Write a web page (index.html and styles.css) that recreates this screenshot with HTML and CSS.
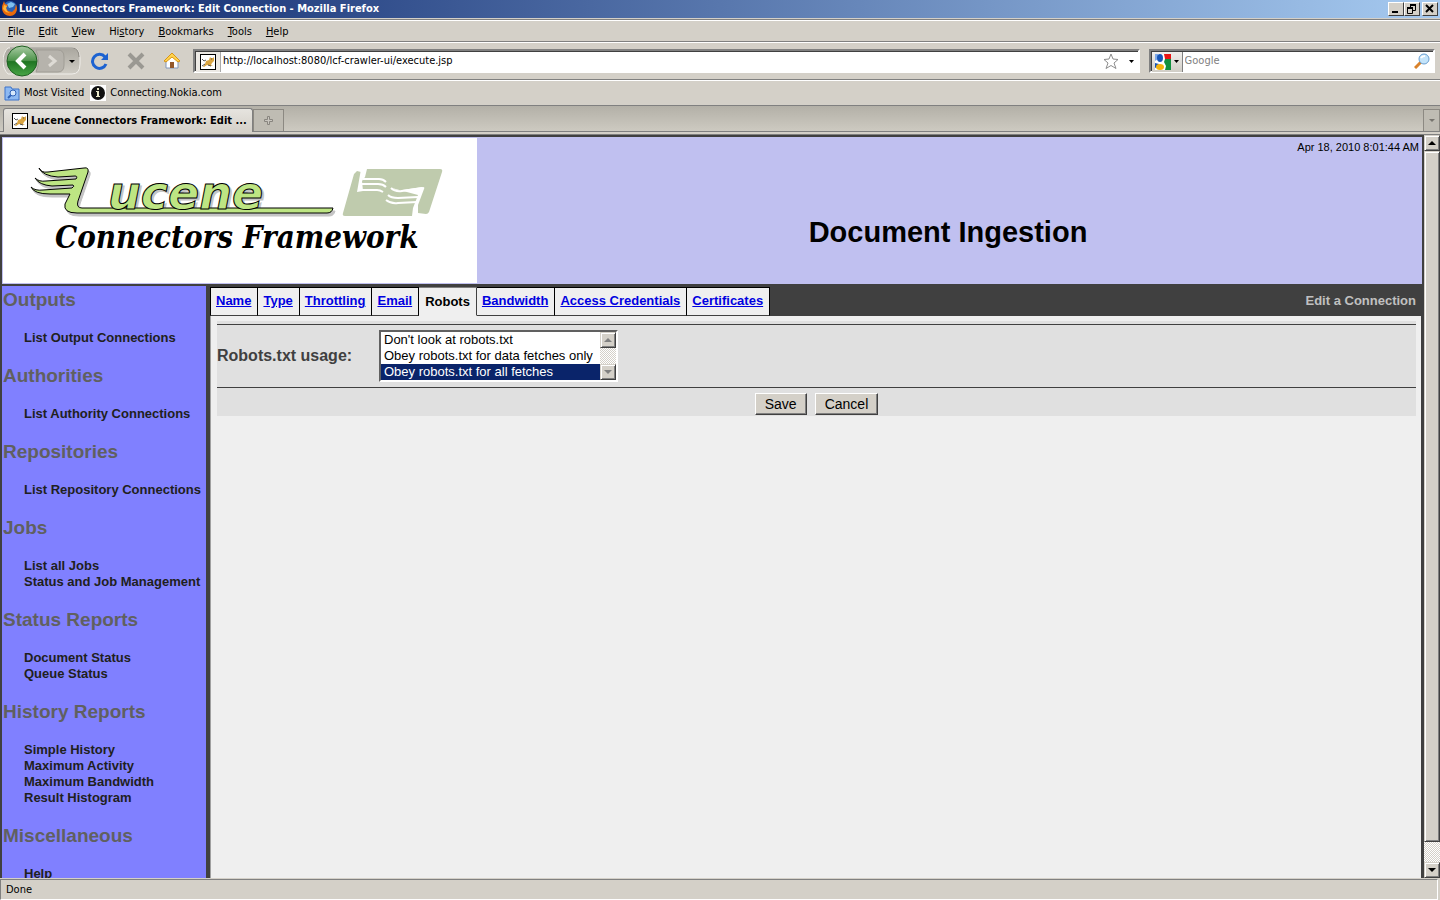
FILE: index.html
```html
<!DOCTYPE html>
<html lang="en">
<head>
  <meta charset="UTF-8">
  <meta name="viewport" content="width=device-width, initial-scale=1.0">
  <title>Lucene Connectors Framework: Edit Connection</title>
  <link rel="stylesheet" href="styles.css">
</head>
<body>
  <svg class="defs" width="0" height="0" aria-hidden="true">
    <symbol id="cat" viewBox="0 0 16 16">
      <rect x=".5" y=".5" width="15" height="15" fill="#fff" stroke="#000"/>
      <path d="M3 13l2-3 1-3 3-1 1-3 1 1h2l1-1v4l-2 2-1 2 2 1h-3l-3-1-3 2z" fill="#d9a441"/>
      <path d="M2 5l2 2 2-1M2 12l3-2M8 11l3 1M11 5h1" stroke="#555" fill="none"/>
    </symbol>
  </svg>

  <!-- window title -->
  <div class="titlebar">
    <svg width="18" height="18" viewBox="0 0 18 18">
      <circle cx="9" cy="8" r="7" fill="#2b62b5"/>
      <path d="M6 4l4-2 4 2-2 3-4 1z" fill="#7fc0ef"/>
      <path d="M3 1l1 3 3 1-2 3 2 3 4 1 3-3 1-5 1 4c0 5-3 8-7 8S1 13 1 8c0-3 1-4 2-7z" fill="#e8690b"/>
      <path d="M3 5l3 1-1 2 1 3 3 2-4-1-3-3z" fill="#fcb63a"/>
    </svg>
    <span class="title">Lucene Connectors Framework: Edit Connection - Mozilla Firefox</span>
    <button class="win" aria-label="Minimize"><svg width="12" height="10"><path d="M2 8h6" stroke="#000" stroke-width="2"/></svg></button>
    <button class="win" aria-label="Restore"><svg width="12" height="10"><path d="M4 1h6M1 4h6" stroke="#000" stroke-width="2"/><path d="M4.500 1v2M9.500 1v5.500H7M1.500 4v5.500h5V4" stroke="#000" fill="none"/></svg></button>
    <button class="win close" aria-label="Close"><svg width="12" height="10"><path d="M2 1l7 7M9 1L2 8" stroke="#000" stroke-width="2"/></svg></button>
  </div>

  <nav class="menubar">
    <a href="#"><u>F</u>ile</a>
    <a href="#"><u>E</u>dit</a>
    <a href="#"><u>V</u>iew</a>
    <a href="#">Hi<u>s</u>tory</a>
    <a href="#"><u>B</u>ookmarks</a>
    <a href="#"><u>T</u>ools</a>
    <a href="#"><u>H</u>elp</a>
  </nav>

  <div class="toolbar">
    <button class="history" aria-label="Back and forward">
      <svg width="80" height="34" viewBox="3 0 80 34">
        <defs>
          <linearGradient id="back" x2="0" y2="1"><stop offset="0" stop-color="#a9cba4"/><stop offset=".48" stop-color="#4f954c"/><stop offset=".52" stop-color="#1f7522"/><stop offset="1" stop-color="#49a546"/></linearGradient>
          <linearGradient id="keyhole" x2="0" y2="1"><stop offset="0" stop-color="#aaa79f"/><stop offset="1" stop-color="#cfccc4"/></linearGradient>
        </defs>
        <path d="M8 4h64q8 0 8 10v6q0 10-8 10H8q-5-5-5-13T8 4z" fill="url(#keyhole)" stroke="#f0eeea"/>
        <path d="M10 4h62q7 0 7 9" fill="none" stroke="#8d8a83"/>
        <path d="M36 6h22q6 0 6 7v8q0 7-6 7H36q5-11 0-22z" fill="#b6b3ac" stroke="#a09d96"/>
        <path d="M49 12l6 5-6 5" fill="none" stroke="#dedbd5" stroke-width="3"/>
        <circle cx="22" cy="17" r="15" fill="url(#back)" stroke="#1d5f20"/>
        <path d="M25 10l-7 7 7 7" fill="none" stroke="#fff" stroke-width="4"/>
        <path d="M69 16h6l-3 3z"/>
      </svg>
    </button>
    <button class="tool" aria-label="Reload">
      <svg width="18" height="18" viewBox="0 0 18 18"><path d="M14 5A7 7 0 1 0 15 12" fill="none" stroke="#1c62d1" stroke-width="3"/><path d="M10 8h7V1z" fill="#1c62d1"/></svg>
    </button>
    <button class="tool" aria-label="Stop">
      <svg width="18" height="18" viewBox="0 0 18 18"><path d="M2 2l14 14M16 2L2 16" stroke="#9a9892" stroke-width="4"/></svg>
    </button>
    <button class="tool" aria-label="Home">
      <svg width="18" height="18" viewBox="0 0 18 18"><path d="M3 9l6-6 6 6v7H3z" fill="#fff" stroke="#8096bb"/><path d="M7 10h4v6H7z" fill="#94582b"/><path d="M1 9l8-8 8 8-2 1-6-5-6 5z" fill="#ffd34d" stroke="#d99415"/></svg>
    </button>
    <div class="field url">
      <span class="site"><svg width="16" height="16"><use href="#cat"/></svg></span>
      <input type="text" aria-label="Location" value="http://localhost:8080/lcf-crawler-ui/execute.jsp">
      <svg width="16" height="16" viewBox="0 0 16 16"><path d="M8 1l2 5 5 .5-4 3.500 2 5.500-5-3-5 3 2-5.500-4-3.500L6 6z" fill="#fff" stroke="#8c8c8c"/></svg>
      <svg class="drop" width="5" height="3"><path d="M0 0h5L2.500 3z"/></svg>
    </div>
    <div class="field search">
      <span class="engine">
        <svg width="16" height="16" viewBox="0 0 16 16"><path d="M0 0h16v16H0z" fill="#fff"/><path d="M0 0h3v5L0 7z" fill="#7fa9e8"/><path d="M9 0h7v5h-6z" fill="#e81414"/><path d="M10 5h6v11h-6l1-4-2-4z" fill="#11903f"/><path d="M0 9l4 1-2 3-2 1z" fill="#1756b8"/><ellipse cx="5" cy="4" rx="3" ry="4" fill="#1756b8"/><ellipse cx="5" cy="13" rx="4" ry="3" fill="#f6b40b"/></svg>
        <svg width="5" height="3"><path d="M0 0h5L2.500 3z"/></svg>
      </span>
      <input type="text" aria-label="Search" placeholder="Google">
      <svg width="16" height="16" viewBox="0 0 16 16"><path d="M1 15l6-6" stroke="#d9822b" stroke-width="3"/><circle cx="10" cy="6" r="5" fill="#c4e4fa" stroke="#6a9fd0"/><path d="M7 5q1-2 4-2" stroke="#fff" stroke-width="2" fill="none"/></svg>
    </div>
  </div>

  <div class="bookmarks">
    <a href="#">
      <svg width="16" height="16" viewBox="0 0 16 16"><path d="M1 2h6l1 2h7v11H1z" fill="#8db9f2" stroke="#3c73c9"/><circle cx="9" cy="8" r="3" fill="#d6e8fc" stroke="#2f62b8"/><path d="M7 10l-3 3" stroke="#2f62b8" stroke-width="2"/></svg>
      Most Visited
    </a>
    <a href="#">
      <svg width="16" height="16" viewBox="0 0 16 16"><path d="M0 0h16v16H0z" fill="#fff"/><circle cx="8" cy="8" r="7" fill="#111"/><path d="M7 3h2v2H7zM6 6h3v5h1v1H6v-1h1V7H6z" fill="#e8e6c8"/></svg>
      Connecting.Nokia.com
    </a>
  </div>

  <div class="tabstrip">
    <div class="browser-tab"><svg width="16" height="16"><use href="#cat"/></svg>Lucene Connectors Framework: Edit ...</div>
    <button class="new-tab" aria-label="New tab"><svg width="9" height="9"><path d="M3.500.5h2v3h3v2h-3v3h-2v-3h-3v-2h3z" fill="#c9c6bf" stroke="#88857f"/></svg></button>
    <button class="all-tabs" aria-label="List all tabs"><svg width="6" height="4"><path d="M0 0h6L3 3z" fill="#77746e"/></svg></button>
  </div>

  <!-- page area -->
  <div class="viewport">
    <div class="page">
      <header class="banner">
        <div class="logo">
          <svg width="474" height="145" viewBox="3 138 474 145" role="img" aria-label="Lucene Connectors Framework">
            <defs>
              <path id="wing" d="M39 168q2 5 9 4l36-4q5-1 4 4l-10 29q-2 7 4 7h251q-1 5-6 5H77q-14 0-12-9l5-10H50q-16 0-19-7 4 4 12 3l29-2q3-2 1-3l-21 1q-13-1-17-8 4 4 11 3l30-2q2-3-1-3l-17 1q-15-1-19-9z"/>
              <text id="word" x="108" y="209">ucene</text>
            </defs>
            <g class="shade">
              <use href="#wing" x="2" y="3"/>
              <use href="#word" x="2" y="2"/>
            </g>
            <g class="mark">
              <use href="#wing"/>
              <use href="#word"/>
            </g>
            <path class="flag" d="M357 171l4 1 5-3h74q3 0 2 3l-13 40q-1 2-3 2l-8-1-5 3h-68q-3 0-2-3l11-39z"/>
            <path class="hand" d="M361 169h6l-2 8-3 4 1 10-6 1zM392 188q5 3 10 2l21-3q2 0 1 2l-6 16v11h-6l1-8 5-13z"/>
            <path class="fingers" d="M363 179h16q4 0 7 3M362 184h16q5 0 8 3M360 190h17q3 0 6 2M391 188q4 4 11 3l20-3M388 195q3 3 10 3l20-1M386 200q5 4 12 3l19-1"/>
            <text class="name" x="55" y="248">Connectors Framework</text>
          </svg>
        </div>
        <div class="banner-text">
          <div class="date">Apr 18, 2010 8:01:44 AM</div>
          <h1>Document Ingestion</h1>
        </div>
      </header>

      <div class="columns">
        <nav class="sidebar">
          <h2>Outputs</h2>
          <ul>
            <li><a href="#">List Output Connections</a></li>
          </ul>
          <h2>Authorities</h2>
          <ul>
            <li><a href="#">List Authority Connections</a></li>
          </ul>
          <h2>Repositories</h2>
          <ul>
            <li><a href="#">List Repository Connections</a></li>
          </ul>
          <h2>Jobs</h2>
          <ul>
            <li><a href="#">List all Jobs</a></li>
            <li><a href="#">Status and Job Management</a></li>
          </ul>
          <h2>Status Reports</h2>
          <ul>
            <li><a href="#">Document Status</a></li>
            <li><a href="#">Queue Status</a></li>
          </ul>
          <h2>History Reports</h2>
          <ul>
            <li><a href="#">Simple History</a></li>
            <li><a href="#">Maximum Activity</a></li>
            <li><a href="#">Maximum Bandwidth</a></li>
            <li><a href="#">Result Histogram</a></li>
          </ul>
          <h2>Miscellaneous</h2>
          <ul>
            <li><a href="#">Help</a></li>
          </ul>
        </nav>

        <main class="main">
          <div class="tabs">
            <a href="#">Name</a>
            <a href="#">Type</a>
            <a href="#">Throttling</a>
            <a href="#">Email</a>
            <span class="active">Robots</span>
            <a href="#">Bandwidth</a>
            <a href="#">Access Credentials</a>
            <a href="#">Certificates</a>
            <div class="heading">Edit a Connection</div>
          </div>
          <form class="panel">
            <div class="form">
              <div class="row">
                <label for="usage">Robots.txt usage:</label>
                <div class="listbox">
                  <select id="usage" size="3">
                    <option>Don't look at robots.txt</option>
                    <option>Obey robots.txt for data fetches only</option>
                    <option selected>Obey robots.txt for all fetches</option>
                  </select>
                  <div class="scroll off">
                    <span class="arrow"><svg width="8" height="5"><path d="M0 4h8L4 0z"/></svg></span>
                    <span class="arrow"><svg width="8" height="5"><path d="M0 0h8L4 4z"/></svg></span>
                  </div>
                </div>
              </div>
              <div class="actions">
                <button type="button">Save</button>
                <button type="button">Cancel</button>
              </div>
            </div>
          </form>
        </main>
      </div>
    </div>
    <div class="scroll">
      <span class="arrow"><svg width="8" height="5"><path d="M0 4h8L4 0z"/></svg></span>
      <span class="thumb"></span>
      <span class="arrow"><svg width="8" height="5"><path d="M0 0h8L4 4z"/></svg></span>
    </div>
  </div>

  <footer class="status">Done</footer>
</body>
</html>
```
FILE: styles.css
```css
* {
  box-sizing: border-box;
}
body {
  margin: 0;
  height: 100vh;
  display: flex;
  flex-direction: column;
  overflow: hidden;
  background: #d4d0c8;
  color: #000;
  font: 11px/14px "DejaVu Sans Condensed", Tahoma, sans-serif;
}
a {
  color: inherit;
  text-decoration: none;
}
button, input, select {
  font: inherit;
  color: inherit;
  margin: 0;
  padding: 0;
  border: 0;
  border-radius: 0;
  background: none;
  outline: none;
}
svg {
  display: block;
  flex: none;
}
.defs {
  position: absolute;
}

/* browser window */
.titlebar {
  flex: none;
  display: flex;
  align-items: center;
  height: 18px;
  padding: 0 2px 0 1px;
  background: linear-gradient(90deg, #0a246a, #a6caf0);
  color: #fff;
  font-weight: bold;
}
.title {
  flex: 1;
  white-space: nowrap;
}
.win {
  width: 16px;
  height: 14px;
  padding: 1px;
  background: #d4d0c8;
  border: 1px solid;
  border-color: #fff #404040 #404040 #fff;
}
.close {
  margin-left: 2px;
}
.menubar {
  flex: none;
  display: flex;
  align-items: center;
  gap: 14px;
  height: 23px;
  margin-top: 1px;
  padding: 2px 8px 0;
  border-top: 1px solid #808080;
  border-bottom: 1px solid #808080;
  box-shadow: inset 0 1px #fff;
}
.toolbar {
  flex: none;
  display: flex;
  align-items: center;
  height: 38px;
  padding: 0 5px 0 3px;
  background: #d4d0c8;
  border-top: 1px solid #fff;
  border-bottom: 1px solid #808080;
}
.tool {
  margin-left: 18px;
}
.history + .tool {
  margin-left: 8px;
}
.field {
  display: flex;
  align-items: center;
  height: 24px;
  background: #fff;
  border: 2px solid;
  border-color: #808080 #fff #fff #808080;
  box-shadow: inset 1px 1px #404040;
}
.field input {
  flex: 1;
  min-width: 0;
  padding-left: 2px;
}
.field input::placeholder {
  color: #808080;
  opacity: 1;
}
.url {
  flex: 1;
  margin-left: 12px;
}
.site {
  padding: 2px 4px;
  margin: 1px 0 0 1px;
  background: #ece9e4;
  border-right: 1px solid #aaa;
}
.drop {
  margin: 0 4px 0 10px;
}
.search {
  width: 20%;
  margin-left: 9px;
  padding-right: 3px;
}
.engine {
  display: flex;
  align-items: center;
  gap: 3px;
  padding: 2px 3px;
  margin: 1px 0 0 1px;
  background: linear-gradient(#f1efec, #d0cdc6);
  border-right: 1px solid #808080;
}
.bookmarks {
  flex: none;
  display: flex;
  align-items: center;
  gap: 6px;
  height: 26px;
  padding: 0 4px;
  border-top: 1px solid #fff;
  border-bottom: 1px solid #808080;
}
.bookmarks a {
  display: flex;
  align-items: center;
  gap: 4px;
}
.tabstrip {
  flex: none;
  display: flex;
  align-items: flex-end;
  height: 26px;
  padding-left: 3px;
  background: linear-gradient(#b3b0a7, #cdcac1);
  border-bottom: 1px solid #808080;
}
.browser-tab {
  display: flex;
  align-items: center;
  gap: 3px;
  width: 250px;
  height: 24px;
  padding: 0 8px;
  margin-bottom: -1px;
  background: linear-gradient(#e6e4df, #d4d0c8);
  border: 1px solid #808080;
  border-bottom: 0;
  border-radius: 3px 3px 0 0;
  font-weight: bold;
  white-space: nowrap;
}
.new-tab, .all-tabs {
  display: flex;
  align-items: center;
  justify-content: center;
  width: 31px;
  height: 22px;
  background: #bfbcb3;
  border: 1px solid #8c8982;
  border-bottom: 0;
}
.all-tabs {
  width: 17px;
  margin-left: auto;
}
.status {
  flex: none;
  height: 21px;
  margin: 1px 2px 0 0;
  padding: 3px 5px;
  border: 1px solid #808080;
  border-right-color: #fff;
  border-bottom-color: #fff;
}

/* scroll bars */
.scroll {
  flex: none;
  display: flex;
  flex-direction: column;
  justify-content: space-between;
  width: 16px;
  background: repeating-conic-gradient(#fff 0 25%, #d4d0c8 0 50%) 0 0 / 2px 2px;
}
.arrow, .thumb {
  display: flex;
  align-items: center;
  justify-content: center;
  height: 16px;
  background: #d4d0c8;
  border: 1px solid;
  border-color: #d4d0c8 #404040 #404040 #d4d0c8;
  box-shadow: inset 1px 1px #fff, inset -1px -1px #808080;
}
.thumb {
  flex: 1;
  margin-bottom: 20px;
}
.off path {
  fill: #808080;
}

/* page */
.viewport {
  flex: 1;
  min-height: 0;
  display: flex;
  margin-top: 2px;
  border-top: 1px solid #808080;
  font-family: "Liberation Sans", Arial, sans-serif;
}
.page {
  flex: 1;
  min-width: 0;
  display: flex;
  flex-direction: column;
  gap: 2px;
  padding: 2px 2px 0;
  background: #404040;
}
.banner {
  flex: none;
  display: flex;
  background: #c0c0f0;
}
.logo {
  margin: 1px 0 1px 1px;
  background: #fff;
}
#word {
  font: italic bold 46px "DejaVu Sans", sans-serif;
}
.mark {
  fill: #bde583;
  stroke: #000;
}
.shade {
  fill: #c4c4c4;
  stroke: #c4c4c4;
}
.name {
  font: italic bold 31px "DejaVu Serif Condensed", "DejaVu Serif", serif;
}
.flag {
  fill: #bfcbad;
}
.hand {
  fill: #fff;
}
.fingers {
  fill: none;
  stroke: #fff;
  stroke-width: 2px;
}
.banner-text {
  flex: 1;
  padding: 3px 3px 0 0;
}
.date {
  text-align: right;
}
h1 {
  margin: 61px 0 0;
  font-size: 29px;
  line-height: 34px;
  text-align: center;
}
.columns {
  flex: 1;
  min-height: 0;
  display: flex;
}
.sidebar {
  flex: none;
  width: 204px;
  padding: 3px 0 0 1px;
  overflow: hidden;
  background: #8080ff;
  font-size: 13px;
  line-height: 16px;
  font-weight: bold;
  color: #202020;
  white-space: nowrap;
}
.sidebar h2 {
  margin: 0 0 19px;
  font-size: 19px;
  line-height: 22px;
  color: #606060;
}
.sidebar ul {
  margin: 0 0 19px;
  padding: 0 0 0 21px;
  list-style: none;
}
.main {
  flex: 1;
  display: flex;
  flex-direction: column;
  margin: 0 1px 0 4px;
}
.tabs {
  display: flex;
  height: 30px;
  padding-top: 1px;
  font-size: 13px;
  line-height: 26px;
  font-weight: bold;
  color: #000;
}
.tabs a, .active {
  padding: 0 6px 0 5px;
  background: #efefef;
  border-top: 1px solid #000;
  border-right: 1px solid #000;
  border-bottom: 1px solid #404040;
}
.tabs a {
  color: #0000e0;
  text-decoration: underline;
}
.tabs a:first-child {
  border-left: 1px solid #000;
}
.tabs .active {
  padding: 1px 6px 0;
  border-color: #808080 #404040 #efefef;
}
.heading {
  margin-left: auto;
  padding: 1px 5px 0;
  color: #c0c0c0;
}
.panel {
  flex: 1;
  padding: 5px 5px 0 6px;
  background: #efefef;
  border-left: 1px solid #a0a0a0;
}
.form {
  padding-top: 3px;
  background: #e0e0e0;
}
.row {
  display: flex;
  align-items: center;
  height: 64px;
  border-top: 1px solid #404040;
  border-bottom: 1px solid #404040;
}
.row label {
  width: 162px;
  font-size: 16px;
  font-weight: bold;
  color: #404040;
}
.listbox {
  display: flex;
  background: #fff;
  border: 2px solid;
  border-color: #606060 #fff #fff #606060;
  font-size: 13px;
}
.listbox select {
  width: 219px;
  height: 48px;
  overflow: hidden;
}
.listbox option {
  height: 16px;
  min-height: 16px;
  padding: 0 3px;
  line-height: 16px;
}
.listbox option:checked {
  background: #0a246a linear-gradient(#0a246a, #0a246a);
  color: #fff;
}
.actions {
  display: flex;
  justify-content: center;
  gap: 8px;
  padding: 5px 0 1px;
}
.actions button {
  height: 22px;
  padding: 0 9px;
  background: #d4d0c8;
  border: 1px solid;
  border-color: #fff #404040 #404040 #fff;
  box-shadow: inset -1px -1px #808080;
  font-size: 14px;
}
```
